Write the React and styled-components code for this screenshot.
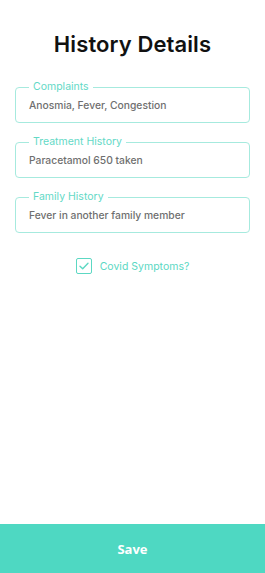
import React from "react";
import styled, { createGlobalStyle } from "styled-components";

const Global = createGlobalStyle`
  html, body { margin: 0; padding: 0; background: #fff; }
  * { box-sizing: border-box; }
`;

const Page = styled.div`
  width: 265px;
  height: 573px;
  display: flex;
  flex-direction: column;
  font-family: "Inter", "Noto Sans", sans-serif;
`;

const Title = styled.h1`
  margin: 30px 0 0;
  font-size: 22px;
  line-height: 28px;
  font-weight: 600;
  text-align: center;
  color: #111;
  letter-spacing: 0.1px;
`;

const Form = styled.div`
  display: flex;
  flex-direction: column;
  gap: 13px;
  padding: 0 15px 0 15px;
  margin-top: 23px;
`;

const Field = styled.fieldset`
  margin: 0;
  padding: 5px 13px 10px;
  border: 1px solid #a6eade;
  border-radius: 4px;
  min-width: 0;
`;

const Legend = styled.legend`
  padding: 0 4px;
  font-size: 10.5px;
  line-height: 12px;
  color: #63d9c6;
  font-weight: 400;
`;

const Value = styled.div`
  font-size: 10.3px;
  line-height: 14px;
  color: #6f6f6f;
  font-weight: 500;
`;

const CheckRow = styled.label`
  display: flex;
  align-items: center;
  justify-content: center;
  gap: 8px;
  margin-top: 25px;
  color: #5cd8c3;
  font-size: 10.5px;
`;

const Box = styled.span`
  width: 16px;
  height: 16px;
  border: 1.5px solid #5cd8c3;
  border-radius: 2px;
  display: flex;
  align-items: center;
  justify-content: center;
`;

const SaveButton = styled.button`
  margin-top: auto;
  height: 49px;
  width: 100%;
  border: none;
  background: #4ed8c2;
  color: #fff;
  font-family: "Open Sans", sans-serif;
  font-weight: 700;
  font-size: 13px;
  padding-top: 2px;
`;

const fields = [
  ["Complaints", "Anosmia, Fever, Congestion"],
  ["Treatment History", "Paracetamol 650 taken"],
  ["Family History", "Fever in another family member"],
];

export default function App() {
  return (
    <Page>
      <Global />
      <Title>History Details</Title>
      <Form>
        {fields.map(([l, v]) => (
          <Field key={l}>
            <Legend>{l}</Legend>
            <Value>{v}</Value>
          </Field>
        ))}
      </Form>
      <CheckRow>
        <Box>
          <svg width="10" height="8" viewBox="0 0 10 8" fill="none">
            <path d="M1 4.2 L3.7 6.8 L9 1.2" stroke="#5cd8c3" strokeWidth="1.4" strokeLinecap="round" strokeLinejoin="round" />
          </svg>
        </Box>
        Covid Symptoms?
      </CheckRow>
      <SaveButton>Save</SaveButton>
    </Page>
  );
}
